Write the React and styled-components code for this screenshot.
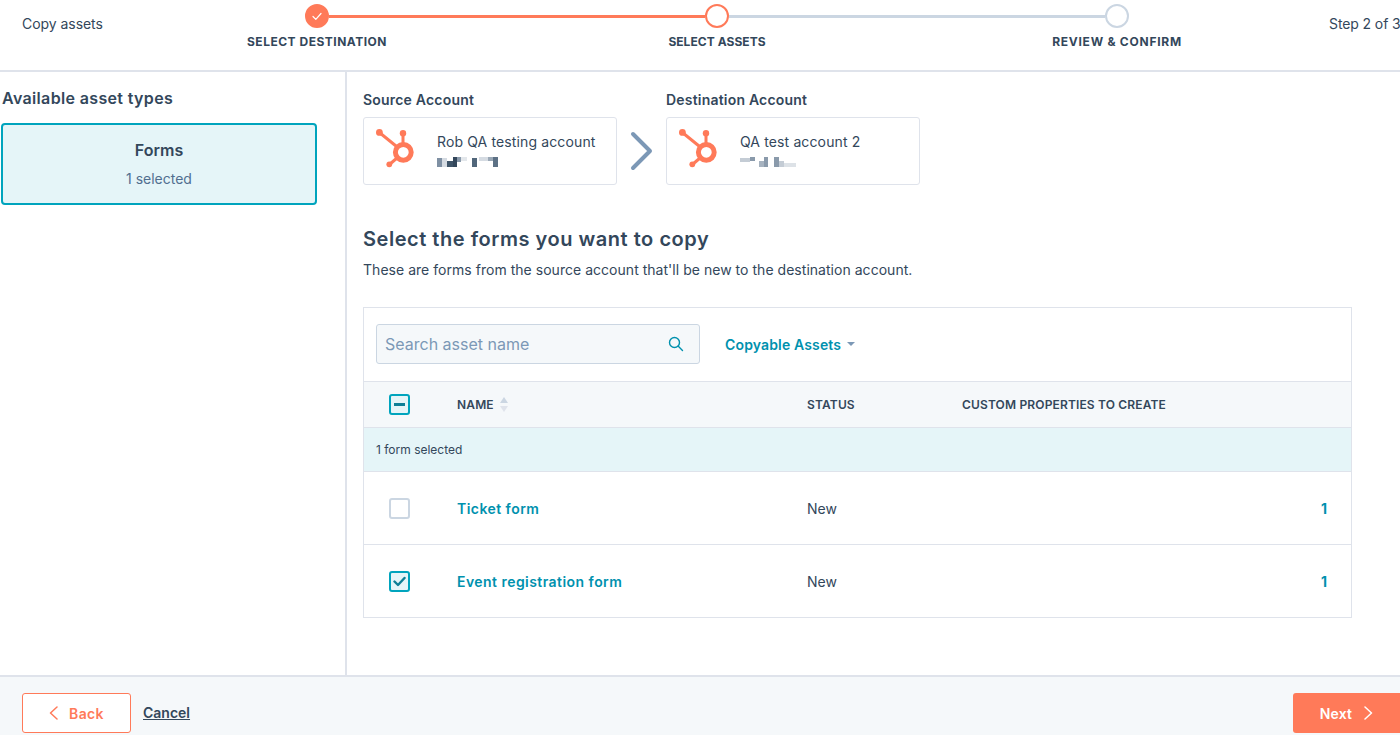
import React from "react";
import styled, { createGlobalStyle } from "styled-components";

const Global = createGlobalStyle`
  html, body { margin: 0; padding: 0; background: #fff; }
  body { font-family: Inter, "Noto Sans", "Liberation Sans", sans-serif; color: #33475b; }
  * { box-sizing: border-box; }
`;

const Page = styled.div`
  width: 1400px; height: 735px; display: flex; flex-direction: column; overflow: hidden;
`;
const Header = styled.header`
  height: 72px; flex: none; border-bottom: 2px solid #dfe3eb;
  display: grid; grid-template-columns: 117px 1200px 83px;
`;
const HeaderText = styled.div`
  font-size: 14px; line-height: 20px; padding-top: 14px; white-space: nowrap;
  padding-left: ${p => p.$left || 0}px; letter-spacing: ${p => p.$ls || 0}px;
`;
const Stepper = styled.div`display: grid; grid-template-columns: repeat(3, 1fr); padding-top: 4px;`;
const Step = styled.div`display: flex; flex-direction: column; align-items: center;`;
const Track = styled.div`display: flex; align-items: center; width: 100%; height: 24px;`;
const Line = styled.div`
  flex: 1; height: 3px;
  background: ${p => p.$tone === "on" ? "#ff7a59" : p.$tone === "off" ? "#cbd6e2" : "transparent"};
`;
const Dot = styled.div`
  width: 24px; height: 24px; border-radius: 50%; flex: none;
  display: flex; align-items: center; justify-content: center;
  border: 2px solid ${p => p.$tone === "off" ? "#cbd6e2" : "#ff7a59"};
  background: ${p => p.$tone === "done" ? "#ff7a59" : "#fff"};
`;
const StepLabel = styled.div`
  margin-top: 6px; font-size: 12px; line-height: 16px; font-weight: 700; letter-spacing: ${p => p.$ls}px; white-space: nowrap;
`;
const Body = styled.div`flex: 1; display: flex; min-height: 0;`;
const Sidebar = styled.aside`
  width: 347px; flex: none; border-right: 2px solid #dfe3eb; padding: 16px 28px 0 1px;
`;
const SideTitle = styled.h2`
  margin: 0 0 15px 1px; font-size: 16px; line-height: 20px; font-weight: 600; white-space: nowrap; letter-spacing: .35px;
`;
const TypeCard = styled.div`
  height: 82px; border: 2px solid #00a4bd; border-radius: 4px; background: #e5f5f8;
  display: flex; flex-direction: column; align-items: center; padding-top: 15px;
`;
const TypeName = styled.div`font-size: 16px; line-height: 20px; font-weight: 600;`;
const TypeSub = styled.div`margin-top: 10px; font-size: 14px; line-height: 18px; color: #516f90;`;
const Main = styled.main`flex: 1; padding: 19px 48px 0 16px; min-width: 0;`;
const Accounts = styled.div`display: flex; align-items: flex-end;`;
const AccountCol = styled.div`width: 254px; flex: none;`;
const AccountLabel = styled.div`
  font-size: 14px; line-height: 18px; font-weight: 600; margin-bottom: 8px; white-space: nowrap; letter-spacing: .2px;
`;
const AccountCard = styled.div`
  height: 68px; border: 1px solid #dfe3eb; border-radius: 3px; background: #fff;
  display: flex; align-items: flex-start; padding: 7px 0 0 10px;
`;
const AccountInfo = styled.div`margin-left: 19px; padding-top: 8px;`;
const AccountName = styled.div`font-size: 14px; line-height: 18px; white-space: nowrap; letter-spacing: .13px;`;
const Redact = styled.svg`display: block; margin-top: 6px;`;
const ArrowBox = styled.div`width: 49px; height: 68px; display: flex; align-items: center; justify-content: center;`;
const Title = styled.h1`margin: 41px 0 0; font-size: 20px; line-height: 26px; font-weight: 600; letter-spacing: .53px; white-space: nowrap;`;
const Lead = styled.p`margin: 8px 0 0; font-size: 14px; line-height: 20px; white-space: nowrap; letter-spacing: .03px;`;
const TableBox = styled.section`margin-top: 27px; border: 1px solid #dfe3eb; width: 989px;`;
const Toolbar = styled.div`height: 73px; display: flex; align-items: flex-start; padding: 16px 0 0 12px;`;
const Search = styled.div`
  width: 324px; height: 40px; border: 1px solid #cbd6e2; border-radius: 3px; background: #f5f8fa;
  display: flex; align-items: center; justify-content: space-between; padding: 0 15px 0 8px;
`;
const Placeholder = styled.span`font-size: 16px; color: #7c98b6; white-space: nowrap;`;
const Filter = styled.div`
  margin-left: 25px; height: 40px; display: flex; align-items: center; gap: 6px;
  font-size: 14px; font-weight: 600; color: #0091ae; white-space: nowrap; letter-spacing: .15px;
`;
const Caret = styled.span`
  width: 0; height: 0; border: 4px solid transparent; border-top-color: #7c98b6; border-bottom: 0;
`;
const Row = styled.div`
  display: grid; grid-template-columns: 93px 350px 155px 1fr auto; align-items: center;
  height: ${p => p.$h}px; padding-right: 24px;
  border-top: 1px solid #dfe3eb; background: ${p => p.$bg || "#fff"};
  font-size: 14px;
`;
const Th = styled.div`font-size: 12px; font-weight: 600; letter-spacing: .15px; display: flex; align-items: center; gap: 6px; white-space: nowrap;`;
const Box = styled.div`
  margin-left: 25px; width: 21px; height: 21px; border-radius: 3px; background: ${p => p.$on ? "#e5f5f8" : "#fff"};
  border: 2px solid ${p => p.$on ? "#00a4bd" : "#cbd6e2"};
  display: flex; align-items: center; justify-content: center;
`;
const Minus = styled.span`width: 11px; height: 3px; background: #0e7f96; display: block;`;
const SelectedBar = styled.div`
  height: 44px; border-top: 1px solid #dfe3eb; background: #e5f5f8; display: flex; align-items: center;
  padding-left: 12px; font-size: 12px;
`;
const NameLink = styled.a`font-weight: 600; color: #0091ae; white-space: nowrap; letter-spacing: .45px;`;
const Count = styled.a`font-weight: 700; color: #0091ae;`;
const Footer = styled.footer`
  height: 60px; flex: none; border-top: 2px solid #dfe3eb; background: #f5f8fa;
  display: flex; align-items: flex-start; padding: 16px 0 0 22px; gap: 12px;
`;
const BackBtn = styled.button`
  width: 109px; height: 40px; border: 1px solid #ff7a59; border-radius: 3px; background: #fff; color: #ff7a59;
  font: 600 14px Inter, sans-serif; letter-spacing: .35px; display: flex; align-items: center; justify-content: center; gap: 11px;
`;
const CancelLink = styled.a`font-size: 14px; line-height: 40px; font-weight: 600; text-decoration: underline;`;
const NextBtn = styled.button`
  margin-left: auto; width: 107px; height: 40px; border: 0; border-radius: 3px 0 0 3px; background: #ff7a59; color: #fff;
  font: 600 14px Inter, sans-serif; letter-spacing: .2px; display: flex; align-items: center; justify-content: center; gap: 12px;
`;

const Hub = () => (
  <svg width="44" height="50" viewBox="374 125 44 50" fill="none">
    <g stroke="#ff7a59" strokeWidth="3" strokeLinecap="round">
      <path d="M380 133 L396 146" />
      <path d="M403 134 V144" />
      <path d="M390 164 L397 158" />
    </g>
    <circle cx="379.4" cy="132.4" r="3.4" fill="#ff7a59" />
    <circle cx="403" cy="133.3" r="3.2" fill="#ff7a59" />
    <circle cx="389.3" cy="164.3" r="2.9" fill="#ff7a59" />
    <circle cx="403.3" cy="152.3" r="7.9" stroke="#ff7a59" strokeWidth="5" />
  </svg>
);

const Pixels = ({ cells }) => (
  <Redact width="62" height="10" viewBox="0 0 62 10">
    {cells.map(([x, y, w, h, c], i) => <rect key={i} x={x} y={y} width={w} height={h} fill={c} />)}
  </Redact>
);

const srcPixels = [
  [0, 1, 5, 9, "#7f90a3"], [5, 1, 5, 9, "#d5dbe2"], [10, 4, 6, 6, "#3f5569"], [16, 0, 4, 10, "#33475b"],
  [20, 0, 4, 5, "#8a9aab"], [24, 0, 6, 4, "#e3e7eb"], [35, 1, 5, 9, "#51667a"], [42, 0, 9, 4, "#d5dbe2"],
  [51, 0, 5, 4, "#9aa8b6"], [56, 0, 5, 10, "#5d7185"],
];
const dstPixels = [
  [0, 1, 10, 4, "#c4ccd5"], [10, 0, 5, 4, "#8a9aab"], [19, 4, 5, 6, "#a7b3c0"], [24, 0, 4, 10, "#8a9aab"],
  [34, 0, 5, 10, "#8a9aab"], [39, 4, 5, 6, "#c4ccd5"], [44, 6, 12, 4, "#dde2e7"],
];

const Check = () => (
  <svg width="10" height="9" viewBox="0 0 10 9" fill="none">
    <path d="M1 4.5 L3.8 7.3 L9 1.5" stroke="#fff" strokeWidth="1.2" strokeLinecap="round" strokeLinejoin="round" />
  </svg>
);
const Chevron = ({ dir, color }) => (
  <svg width="9" height="14" viewBox="0 0 9 14" fill="none">
    <path d={dir === "left" ? "M8 1 L1.5 7 L8 13" : "M1 1 L7.5 7 L1 13"} stroke={color} strokeWidth="1.5" strokeLinecap="round" strokeLinejoin="round" />
  </svg>
);

const steps = [
  { label: "SELECT DESTINATION", left: "none", right: "on", dot: "done", ls: 0.5 },
  { label: "SELECT ASSETS", left: "on", right: "off", dot: "on", ls: 0.05 },
  { label: "REVIEW & CONFIRM", left: "off", right: "none", dot: "off", ls: 0.75 },
];

export default function App() {
  return (
    <Page>
      <Global />
      <Header>
        <HeaderText $left={22} $ls={-0.05}>Copy assets</HeaderText>
        <Stepper>
          {steps.map(s => (
            <Step key={s.label}>
              <Track>
                <Line $tone={s.left} />
                <Dot $tone={s.dot}>{s.dot === "done" && <Check />}</Dot>
                <Line $tone={s.right} />
              </Track>
              <StepLabel $ls={s.ls}>{s.label}</StepLabel>
            </Step>
          ))}
        </Stepper>
        <HeaderText $left={12} $ls={-0.1}>Step 2 of 3</HeaderText>
      </Header>
      <Body>
        <Sidebar>
          <SideTitle>Available asset types</SideTitle>
          <TypeCard>
            <TypeName>Forms</TypeName>
            <TypeSub>1 selected</TypeSub>
          </TypeCard>
        </Sidebar>
        <Main>
          <Accounts>
            <AccountCol>
              <AccountLabel>Source Account</AccountLabel>
              <AccountCard>
                <Hub />
                <AccountInfo>
                  <AccountName>Rob QA testing account</AccountName>
                  <Pixels cells={srcPixels} />
                </AccountInfo>
              </AccountCard>
            </AccountCol>
            <ArrowBox>
              <svg width="24" height="40" viewBox="0 0 24 40" fill="none">
                <path d="M3 3 L20 20 L3 37" stroke="#7c98b6" strokeWidth="4" strokeLinecap="round" strokeLinejoin="round" />
              </svg>
            </ArrowBox>
            <AccountCol>
              <AccountLabel>Destination Account</AccountLabel>
              <AccountCard>
                <Hub />
                <AccountInfo>
                  <AccountName>QA test account 2</AccountName>
                  <Pixels cells={dstPixels} />
                </AccountInfo>
              </AccountCard>
            </AccountCol>
          </Accounts>
          <Title>Select the forms you want to copy</Title>
          <Lead>These are forms from the source account that'll be new to the destination account.</Lead>
          <TableBox>
            <Toolbar>
              <Search>
                <Placeholder>Search asset name</Placeholder>
                <svg width="16" height="16" viewBox="0 0 16 16" fill="none">
                  <circle cx="6.5" cy="6.5" r="5" stroke="#0091ae" strokeWidth="1.4" />
                  <path d="M10.3 10.3 L14.5 14.5" stroke="#0091ae" strokeWidth="1.4" strokeLinecap="round" />
                </svg>
              </Search>
              <Filter>Copyable Assets <Caret /></Filter>
            </Toolbar>
            <Row $h={46} $bg="#f5f8fa">
              <Box $on><Minus /></Box>
              <Th>NAME
                <svg width="8" height="15" viewBox="0 0 8 15">
                  <path d="M4 0 L8 6 H0 Z" fill="#cbd6e2" />
                  <path d="M4 15 L8 9 H0 Z" fill="#dfe3eb" />
                </svg>
              </Th>
              <Th>STATUS</Th>
              <Th>CUSTOM PROPERTIES TO CREATE</Th>
              <span />
            </Row>
            <SelectedBar>1 form selected</SelectedBar>
            <Row $h={73}>
              <Box />
              <NameLink>Ticket form</NameLink>
              <span>New</span>
              <span />
              <Count>1</Count>
            </Row>
            <Row $h={73}>
              <Box $on>
                <svg width="13" height="11" viewBox="0 0 13 11" fill="none">
                  <path d="M1.5 5.5 L5 9 L11.5 2" stroke="#0e7f96" strokeWidth="2.4" strokeLinecap="round" strokeLinejoin="round" />
                </svg>
              </Box>
              <NameLink>Event registration form</NameLink>
              <span>New</span>
              <span />
              <Count>1</Count>
            </Row>
          </TableBox>
        </Main>
      </Body>
      <Footer>
        <BackBtn><Chevron dir="left" color="#ff7a59" />Back</BackBtn>
        <CancelLink>Cancel</CancelLink>
        <NextBtn>Next<Chevron dir="right" color="#fff" /></NextBtn>
      </Footer>
    </Page>
  );
}
